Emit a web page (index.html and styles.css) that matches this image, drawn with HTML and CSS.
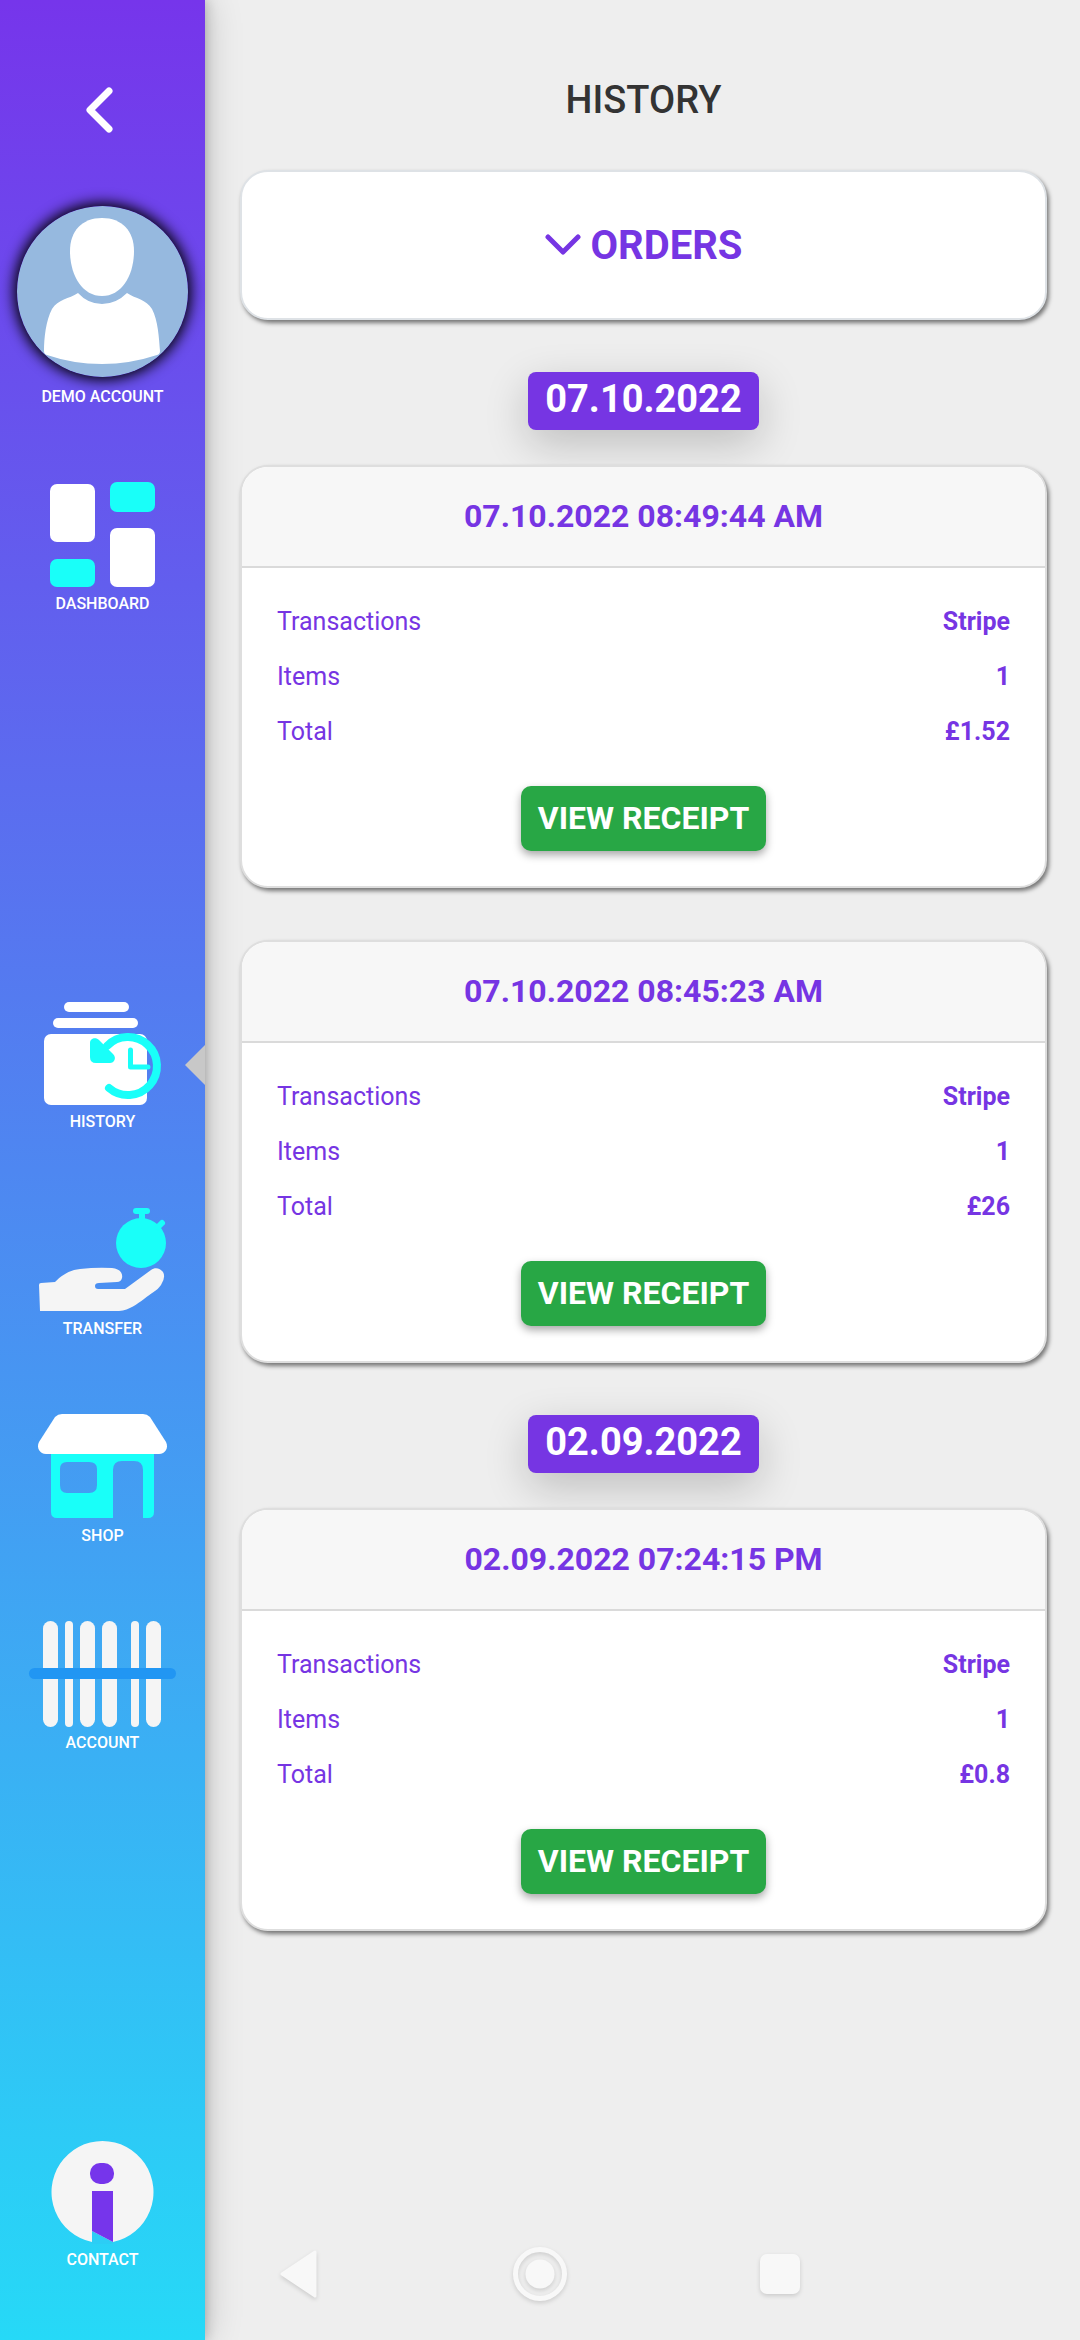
FILE: index.html
```html
<!DOCTYPE html>
<html lang="en">
<head>
<meta charset="utf-8">
<meta name="viewport" content="width=device-width, initial-scale=1">
<title>History</title>
<link rel="stylesheet" href="styles.css">
</head>
<body>
<div class="app">
  <nav class="sidebar" aria-label="Main">
    <div class="group">
      <button class="back" type="button" aria-label="Back">
        <svg width="48" height="60" viewBox="0 0 48 60"><path d="M30 11 11 30l19 19" fill="none" stroke="#fff" stroke-width="7" stroke-linecap="round" stroke-linejoin="round"/></svg>
      </button>
      <a class="profile" href="#profile">
        <svg class="avatar" width="171" height="171" viewBox="0 0 171 171">
          <circle cx="85.500" cy="85.500" r="85.500" fill="#96b9df"/>
          <path d="M85 12c20 0 32 13 32 33 0 24-12 45-32 45S53 69 53 45c0-20 12-33 32-33Z" fill="#fff"/>
          <path d="M61 87q10 11 24 11t25-11c9 6 19 6 25 16 6 11 7 29 8 42q0 3-3 4-27 9-55 9-29 0-55-9-3-1-3-4c0-13 2-31 8-42 6-10 17-10 26-16Z" fill="#fff"/>
        </svg>
        <span class="label">DEMO ACCOUNT</span>
      </a>
      <a class="item" href="#dashboard">
        <svg class="icon" viewBox="0 0 205 108">
          <g fill="#fff"><rect x="50" y="3" width="45" height="58" rx="7"/><rect x="110" y="47" width="45" height="59" rx="7"/></g>
          <g fill="#19fff9"><rect x="110" y="1" width="45" height="30" rx="7"/><rect x="50" y="78" width="45" height="28" rx="7"/></g>
        </svg>
        <span class="label">DASHBOARD</span>
      </a>
    </div>
    <div class="group">
      <a class="item current" href="#history" aria-current="page">
        <svg class="icon" viewBox="0 0 205 108">
          <g fill="#fff"><rect x="64" y="3" width="65" height="10" rx="5"/><rect x="53" y="19" width="85" height="10" rx="5"/><rect x="44" y="35" width="103" height="71" rx="7"/></g>
          <path d="M107 47A29 29 0 1 1 109 89" fill="none" stroke="#19fff9" stroke-width="8" stroke-linecap="round"/>
          <path d="M90 44c0-5 6-6 9-3l14 14c4 4 1 9-3 9H96q-6 0-6-6Z" fill="#19fff9"/>
          <path d="M130.500 51v17h17.500" fill="none" stroke="#19fff9" stroke-width="5" stroke-linecap="round" stroke-linejoin="round"/>
        </svg>
        <span class="label">HISTORY</span>
      </a>
      <a class="item" href="#transfer">
        <svg class="icon" viewBox="0 0 205 108">
          <g fill="#19fff9"><circle cx="141" cy="37" r="25"/><rect x="133" y="2" width="17" height="6" rx="3"/><rect x="139" y="5" width="6" height="10"/></g>
          <path d="m158 21 4-4" stroke="#19fff9" stroke-width="6" stroke-linecap="round"/>
          <path d="M39 79q0-2 2-2l14-1c6-6 14-12 25-13q17-2 32-1c8 1 11 5 10 10q-1 4-5 4l-18 1q-4 0-4 3 0 3 3 3h27l26-19c4-3 9-2 12 2q3 5-2 13c-4 6-10 8-17 14-7 5-14 11-25 12H40Z" fill="#f5f5f5"/>
        </svg>
        <span class="label">TRANSFER</span>
      </a>
      <a class="item" href="#shop">
        <svg class="icon" viewBox="0 0 205 108">
          <path fill-rule="evenodd" d="M51 40h103v59q0 6-6 6h-5V57q0-9-9-9H122q-9 0-9 9v48H57q-6 0-6-6ZM67 49q-7 0-7 7v16q0 8 7 8h22q8 0 8-8V56q0-7-8-7Z" fill="#19fff9"/>
          <path d="M55 4q3-3 7-3h81q4 0 7 3l16 25c3 6-1 12-7 12H46c-6 0-10-6-7-12Z" fill="#fff"/>
        </svg>
        <span class="label">SHOP</span>
      </a>
      <a class="item" href="#account">
        <svg class="icon" viewBox="0 0 205 108">
          <g fill="#f5f5f5"><rect x="43" y="1" width="15" height="106" rx="7.500"/><rect x="65" y="1" width="8" height="106" rx="4"/><rect x="80" y="1" width="15" height="106" rx="7.500"/><rect x="102" y="1" width="15" height="106" rx="7.500"/><rect x="131" y="1" width="8" height="106" rx="4"/><rect x="146" y="1" width="15" height="106" rx="7.500"/></g>
          <rect x="29" y="48" width="147" height="11" rx="5.500" fill="#2196f3"/>
        </svg>
        <span class="label">ACCOUNT</span>
      </a>
    </div>
    <div class="group">
      <a class="item" href="#contact">
        <svg class="icon" viewBox="0 0 205 108">
          <path d="M92 105a51 51 0 1 1 21 0Z" fill="#f5f5f5"/>
          <path d="m92 94 21 11v2H92Z" fill="#2ccdf5"/>
          <path d="M92 54h21v51L92 94Z" fill="#7635eb"/>
          <rect x="90" y="26" width="24" height="21" rx="10" fill="#7635eb"/>
        </svg>
        <span class="label">CONTACT</span>
      </a>
    </div>
  </nav>

  <main class="main">
    <h1 class="title">HISTORY</h1>
    <button class="orders" type="button">
      <svg width="36" height="22" viewBox="0 0 36 22"><path d="m3 3 15 15L33 3" fill="none" stroke="#7635e3" stroke-width="5" stroke-linecap="round" stroke-linejoin="round"/></svg>
      ORDERS
    </button>

    <h2 class="date">07.10.2022</h2>
    <div class="cards">
      <article class="card">
        <h3 class="card-head">07.10.2022 08:49:44 AM</h3>
        <div class="card-body">
          <dl class="facts">
            <div class="fact"><dt>Transactions</dt><dd>Stripe</dd></div>
            <div class="fact"><dt>Items</dt><dd>1</dd></div>
            <div class="fact"><dt>Total</dt><dd>£1.52</dd></div>
          </dl>
          <button class="receipt" type="button">VIEW RECEIPT</button>
        </div>
      </article>
      <article class="card">
        <h3 class="card-head">07.10.2022 08:45:23 AM</h3>
        <div class="card-body">
          <dl class="facts">
            <div class="fact"><dt>Transactions</dt><dd>Stripe</dd></div>
            <div class="fact"><dt>Items</dt><dd>1</dd></div>
            <div class="fact"><dt>Total</dt><dd>£26</dd></div>
          </dl>
          <button class="receipt" type="button">VIEW RECEIPT</button>
        </div>
      </article>
    </div>

    <h2 class="date">02.09.2022</h2>
    <div class="cards">
      <article class="card">
        <h3 class="card-head">02.09.2022 07:24:15 PM</h3>
        <div class="card-body">
          <dl class="facts">
            <div class="fact"><dt>Transactions</dt><dd>Stripe</dd></div>
            <div class="fact"><dt>Items</dt><dd>1</dd></div>
            <div class="fact"><dt>Total</dt><dd>£0.8</dd></div>
          </dl>
          <button class="receipt" type="button">VIEW RECEIPT</button>
        </div>
      </article>
    </div>
  </main>
</div>

<div class="system-bar">
  <button class="system-key" type="button" aria-label="System back">
    <svg width="60" height="60" viewBox="0 0 60 60"><path d="M12 30 45 8v44Z" fill="#f8f8f8" stroke="#f8f8f8" stroke-width="3" stroke-linejoin="round"/></svg>
  </button>
  <button class="system-key" type="button" aria-label="Home">
    <svg width="60" height="60" viewBox="0 0 60 60"><circle cx="30" cy="30" r="24.500" fill="none" stroke="#f8f8f8" stroke-width="5"/><circle cx="30" cy="30" r="14.500" fill="#f8f8f8"/></svg>
  </button>
  <button class="system-key" type="button" aria-label="Recent apps">
    <svg width="60" height="60" viewBox="0 0 60 60"><rect x="10" y="10" width="40" height="40" rx="7" fill="#f8f8f8"/></svg>
  </button>
</div>
</body>
</html>
```
FILE: styles.css
```css
* {
  box-sizing: border-box;
}

body {
  margin: 0;
  background: #eee;
  color: #7635e3;
  font-family: Roboto, sans-serif;
}

button {
  border: 0;
  padding: 0;
  background: none;
  color: inherit;
  font: inherit;
  cursor: pointer;
}

svg {
  display: block;
}

h1, h2, h3, dl, dd {
  margin: 0;
}

.app {
  display: flex;
  min-height: 100vh;
}

/* Sidebar */
.sidebar {
  flex: 0 0 205px;
  display: flex;
  flex-direction: column;
  justify-content: space-between;
  padding: 80px 0 69px;
  background: linear-gradient(#7635eb, #26d9f7);
  box-shadow: 0 0 12px rgba(0, 0, 0, 0.25), 0 0 36px rgba(0, 0, 0, 0.2);
}

.group {
  display: flex;
  flex-direction: column;
  align-items: center;
  gap: 73px;
}

.back {
  margin-bottom: -7px;
}

.profile,
.item {
  position: relative;
  display: flex;
  flex-direction: column;
  align-items: center;
  gap: 4px;
  width: 100%;
  color: #fff;
  text-decoration: none;
}

.profile {
  gap: 9px;
}

.avatar {
  border-radius: 50%;
  box-shadow: 0 0 14px 3px #000;
}

.icon {
  width: 100%;
  height: 108px;
}

.label {
  font-size: 16px;
  font-weight: 500;
  line-height: 22px;
}

.current::after {
  content: "";
  position: absolute;
  top: 46px;
  right: 0;
  border: solid transparent;
  border-width: 20px 20px 20px 0;
  border-right-color: #c8c8c8;
}

/* Content */
.main {
  flex: 1;
  display: flex;
  flex-direction: column;
  align-items: center;
  padding: 76px 33px 140px 35px;
}

.title {
  color: #333;
  font-size: 38px;
  font-weight: 500;
  line-height: 48px;
}

.orders,
.card {
  width: 100%;
  border: 2px solid #dee2e6;
  border-radius: 28px;
  background: #fff;
  box-shadow: 2px 3px 4px rgba(0, 0, 0, 0.5);
}

.orders {
  display: flex;
  align-items: center;
  justify-content: center;
  gap: 10px;
  height: 150px;
  margin-top: 46px;
  font-size: 40px;
  font-weight: 700;
}

.date {
  margin: 52px 0 35px;
  padding: 3px 17px 7px;
  border-radius: 8px;
  background: #7635e3;
  box-shadow: 0 14px 44px rgba(0, 0, 0, 0.2);
  color: #fff;
  font-size: 38px;
  font-weight: 700;
  line-height: 48px;
}

.cards {
  display: flex;
  flex-direction: column;
  gap: 52px;
  width: 100%;
}

.card {
  border-color: #dedede;
  overflow: hidden;
}

.card-head {
  padding: 26px;
  border-bottom: 2px solid #dadada;
  background: #f7f7f7;
  font-size: 32px;
  font-weight: 700;
  line-height: 47px;
  text-align: center;
}

.card-body {
  display: flex;
  flex-direction: column;
  align-items: center;
  gap: 27px;
  padding: 26px 35px 35px;
}

.facts {
  width: 100%;
}

.fact {
  display: flex;
  justify-content: space-between;
  font-size: 25px;
  line-height: 55px;
}

.fact dd {
  font-weight: 700;
}

.receipt {
  padding: 0 17px;
  border-radius: 10px;
  background: #28a745;
  box-shadow: 0 4px 8px rgba(0, 0, 0, 0.35);
  color: #fff;
  font-size: 32px;
  font-weight: 700;
  line-height: 65px;
}

/* System navigation lies over the page */
.system-bar {
  position: fixed;
  right: 0;
  bottom: 36px;
  left: 0;
  display: flex;
  justify-content: center;
  gap: 180px;
}

.system-key {
  filter: drop-shadow(0 2px 2px rgba(0, 0, 0, 0.14));
}
```
